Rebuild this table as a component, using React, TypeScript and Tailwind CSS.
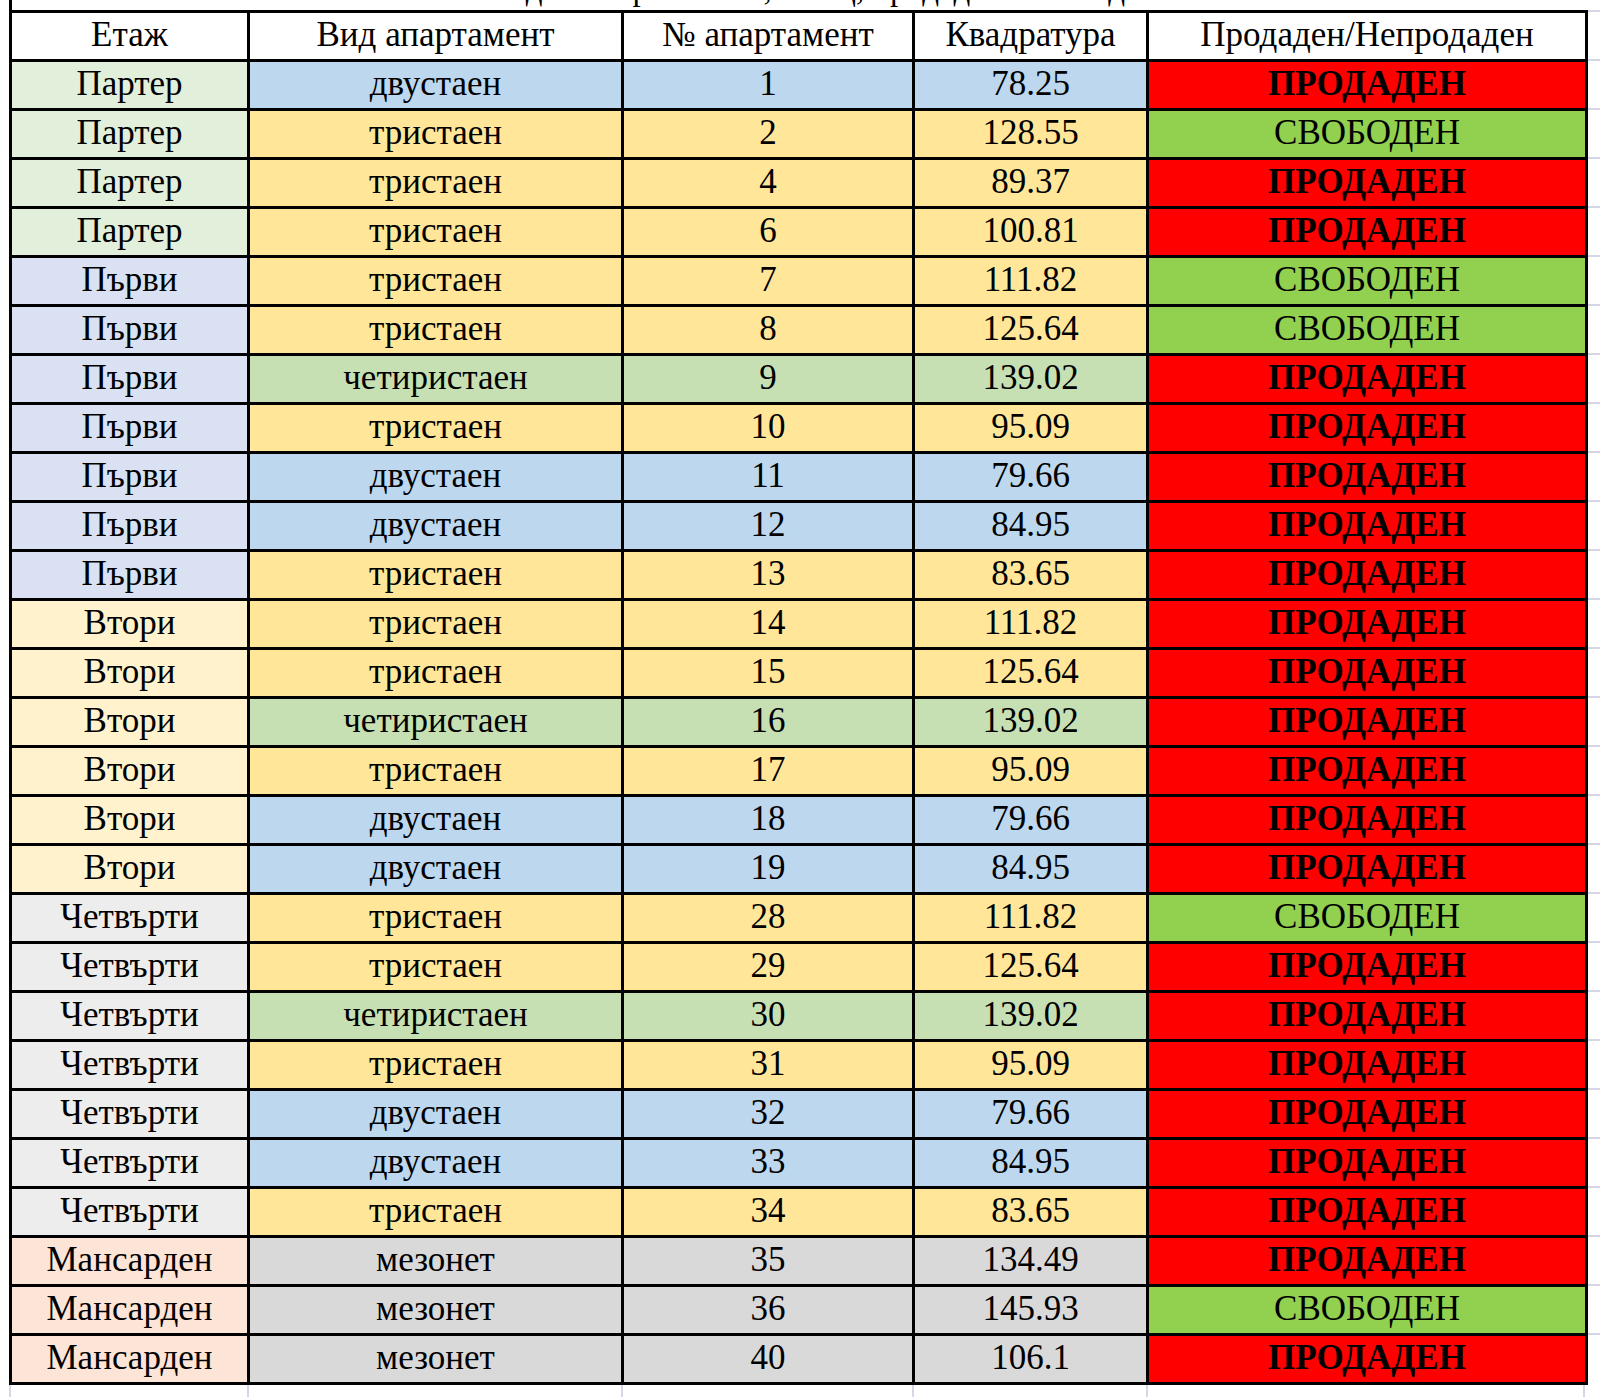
import React from 'react';

type Row = {
  floor: string;
  type: string;
  no: string;
  area: string;
  sold: boolean;
};

const FLOOR_BG: Record<string, string> = {
  'Партер': 'bg-[#e2efda]',
  'Първи': 'bg-[#d9e1f2]',
  'Втори': 'bg-[#fff2cc]',
  'Четвърти': 'bg-[#ededed]',
  'Мансарден': 'bg-[#fce4d6]',
};

const TYPE_BG: Record<string, string> = {
  'двустаен': 'bg-[#bdd7ee]',
  'тристаен': 'bg-[#ffe699]',
  'четиристаен': 'bg-[#c6e0b4]',
  'мезонет': 'bg-[#d9d9d9]',
};

const rows: Row[] = [
  { floor: 'Партер', type: 'двустаен', no: '1', area: '78.25', sold: true },
  { floor: 'Партер', type: 'тристаен', no: '2', area: '128.55', sold: false },
  { floor: 'Партер', type: 'тристаен', no: '4', area: '89.37', sold: true },
  { floor: 'Партер', type: 'тристаен', no: '6', area: '100.81', sold: true },
  { floor: 'Първи', type: 'тристаен', no: '7', area: '111.82', sold: false },
  { floor: 'Първи', type: 'тристаен', no: '8', area: '125.64', sold: false },
  { floor: 'Първи', type: 'четиристаен', no: '9', area: '139.02', sold: true },
  { floor: 'Първи', type: 'тристаен', no: '10', area: '95.09', sold: true },
  { floor: 'Първи', type: 'двустаен', no: '11', area: '79.66', sold: true },
  { floor: 'Първи', type: 'двустаен', no: '12', area: '84.95', sold: true },
  { floor: 'Първи', type: 'тристаен', no: '13', area: '83.65', sold: true },
  { floor: 'Втори', type: 'тристаен', no: '14', area: '111.82', sold: true },
  { floor: 'Втори', type: 'тристаен', no: '15', area: '125.64', sold: true },
  { floor: 'Втори', type: 'четиристаен', no: '16', area: '139.02', sold: true },
  { floor: 'Втори', type: 'тристаен', no: '17', area: '95.09', sold: true },
  { floor: 'Втори', type: 'двустаен', no: '18', area: '79.66', sold: true },
  { floor: 'Втори', type: 'двустаен', no: '19', area: '84.95', sold: true },
  { floor: 'Четвърти', type: 'тристаен', no: '28', area: '111.82', sold: false },
  { floor: 'Четвърти', type: 'тристаен', no: '29', area: '125.64', sold: true },
  { floor: 'Четвърти', type: 'четиристаен', no: '30', area: '139.02', sold: true },
  { floor: 'Четвърти', type: 'тристаен', no: '31', area: '95.09', sold: true },
  { floor: 'Четвърти', type: 'двустаен', no: '32', area: '79.66', sold: true },
  { floor: 'Четвърти', type: 'двустаен', no: '33', area: '84.95', sold: true },
  { floor: 'Четвърти', type: 'тристаен', no: '34', area: '83.65', sold: true },
  { floor: 'Мансарден', type: 'мезонет', no: '35', area: '134.49', sold: true },
  { floor: 'Мансарден', type: 'мезонет', no: '36', area: '145.93', sold: false },
  { floor: 'Мансарден', type: 'мезонет', no: '40', area: '106.1', sold: true },
];

const headers = ['Етаж', 'Вид апартамент', '№ апартамент', 'Квадратура', 'Продаден/Непродаден'];

function Cell({ className = '', children }: { className?: string; children: React.ReactNode }) {
  return (
    <div className={`h-[46px] pb-[4px] flex items-center justify-center leading-none whitespace-nowrap ${className}`}>
      {children}
    </div>
  );
}

export default function App() {
  return (
    <div
      className="w-[1600px] h-[1397px] bg-white overflow-hidden text-black text-[35px]"
      style={{ fontFamily: '"Liberation Serif", "Times New Roman", serif' }}
    >
      <div className="flex">
        <div className="w-[1588px] shrink-0">
          {/* title row, scrolled almost out of view: only descenders show */}
          <div className="h-[10px] overflow-hidden relative ml-[9px] border-l-[3px] border-black">
            <div className="absolute left-0 right-0 bottom-[4px] text-center text-[33px] leading-none whitespace-nowrap">
              Свободни апартаменти, площ, продадени/свободни
            </div>
          </div>

          {/* table */}
          <div className="ml-[9px] bg-black p-[3px] grid grid-cols-[235px_371px_288px_231px_436px] gap-[3px]">
            {headers.map((h) => (
              <Cell key={h} className="bg-white">
                {h}
              </Cell>
            ))}
            {rows.map((r) => (
              <React.Fragment key={r.no}>
                <Cell className={FLOOR_BG[r.floor]}>{r.floor}</Cell>
                <Cell className={TYPE_BG[r.type]}>{r.type}</Cell>
                <Cell className={TYPE_BG[r.type]}>{r.no}</Cell>
                <Cell className={TYPE_BG[r.type]}>{r.area}</Cell>
                {r.sold ? (
                  <Cell className="bg-[#ff0000] font-bold">ПРОДАДЕН</Cell>
                ) : (
                  <Cell className="bg-[#92d050]">СВОБОДЕН</Cell>
                )}
              </React.Fragment>
            ))}
          </div>

          {/* sheet gridlines under the table */}
          <div className="ml-[9px] flex h-[12px]">
            <div className="w-[238px] border-l-2 border-[#d6d6e6]" />
            <div className="w-[374px] border-l-2 border-[#d6d6e6]" />
            <div className="w-[291px] border-l-2 border-[#d6d6e6]" />
            <div className="w-[234px] border-l-2 border-[#d6d6e6]" />
            <div className="w-[439px] border-l-2 border-r-2 border-[#d6d6e6]" />
          </div>
        </div>

        {/* sheet gridlines right of the table */}
        <div className="flex-1 pt-[10px]">
          {Array.from({ length: 28 }).map((_, i) => (
            <div key={i} className="h-[49px] border-t-2 border-[#d6d6e6]" />
          ))}
        </div>
      </div>
    </div>
  );
}
